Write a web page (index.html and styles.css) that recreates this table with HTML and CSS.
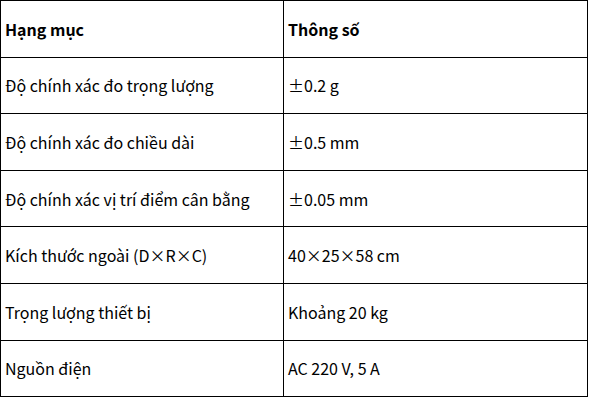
FILE: index.html
```html
<!DOCTYPE html>
<html lang="vi">
<head>
<meta charset="utf-8">
<link rel="stylesheet" href="styles.css">
</head>
<body>
<table class="spec">
  <thead>
    <tr><th class="c1">Hạng mục</th><th class="c2">Thông số</th></tr>
  </thead>
  <tbody>
    <tr><td>Độ chính xác đo trọng lượng</td><td>±0.2 g</td></tr>
    <tr><td>Độ chính xác đo chiều dài</td><td>±0.5 mm</td></tr>
    <tr><td>Độ chính xác vị trí điểm cân bằng</td><td>±0.05 mm</td></tr>
    <tr><td>Kích thước ngoài (D×R×C)</td><td>40×25×58 cm</td></tr>
    <tr><td>Trọng lượng thiết bị</td><td>Khoảng 20 kg</td></tr>
    <tr><td>Nguồn điện</td><td>AC 220 V, 5 A</td></tr>
  </tbody>
</table>
</body>
</html>
```
FILE: styles.css
```css
html, body {
  margin: 0;
  padding: 0;
  background: #fff;
}
.spec {
  border-collapse: collapse;
  width: 588px;
  font-family: "Noto Sans CJK SC", "Noto Sans", sans-serif;
  font-size: 16px;
  color: #000;
}
.spec th, .spec td {
  border: 1px solid #000;
  height: 56.6px;
  padding: 0 4px;
  text-align: left;
  vertical-align: middle;
  box-sizing: border-box;
}
.spec th {
  font-weight: bold;
}
.spec .c1 {
  width: 283px;
}
```
